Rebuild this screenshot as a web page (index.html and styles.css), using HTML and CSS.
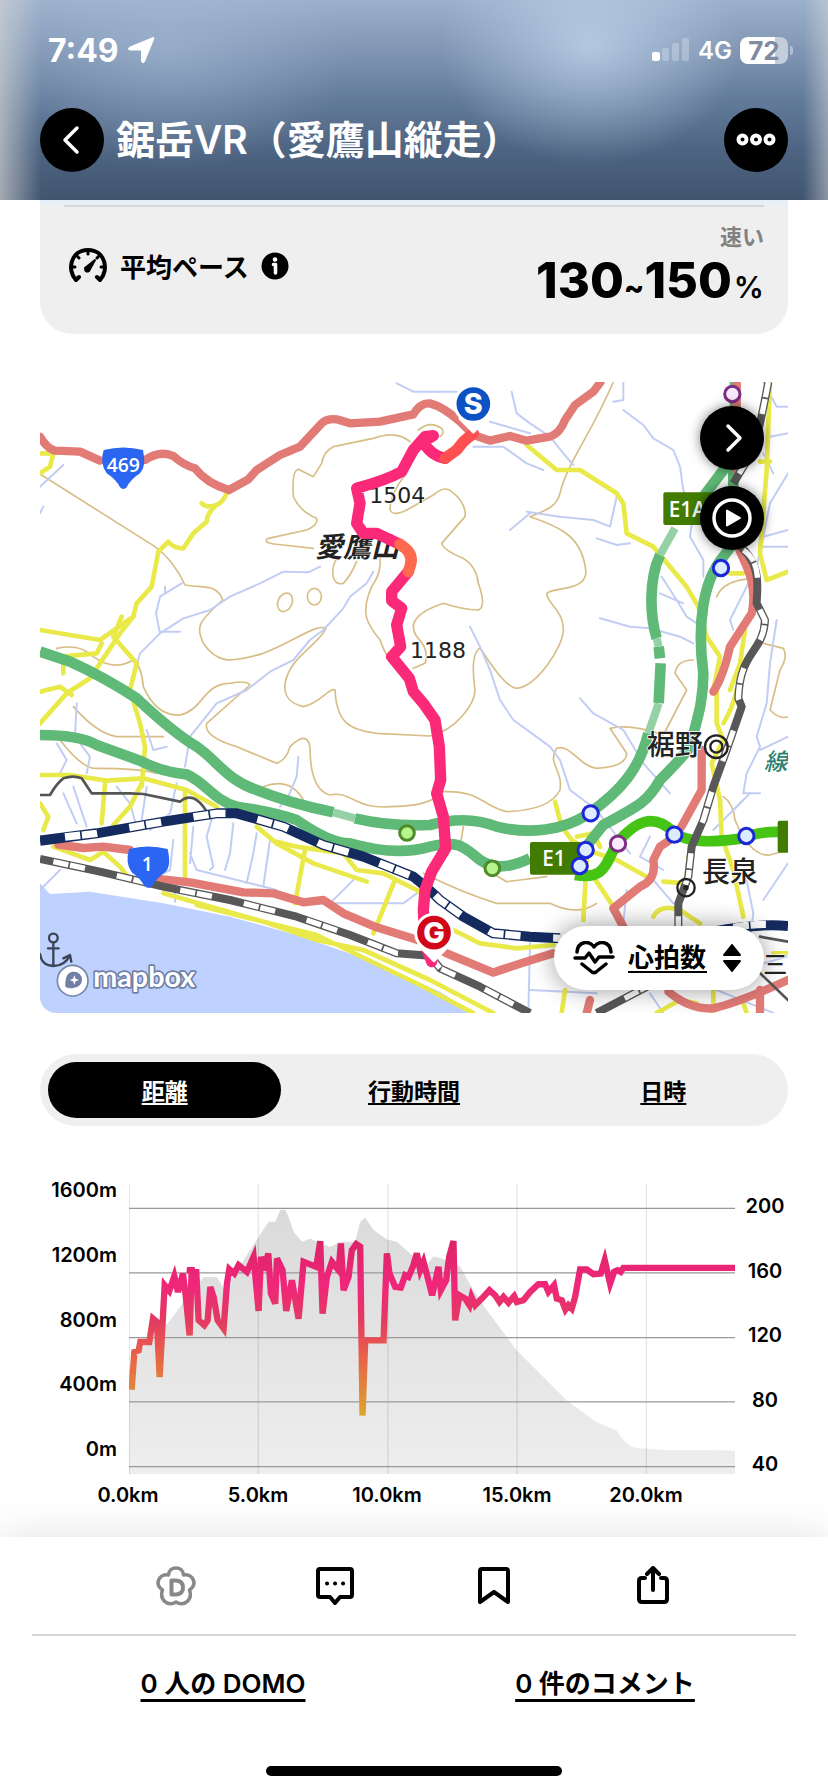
FILE: index.html
```html
<!DOCTYPE html>
<html lang="ja">
<head>
  <title>鋸岳VR（愛鷹山縦走）</title>
  <meta charset="UTF-8">
  <meta name="viewport" content="width=device-width, initial-scale=1">
  <link rel="stylesheet" href="styles.css">
</head>
<body>
<header class="header">
  <div class="status">
    <span class="clock">7:49</span>
    <svg class="location" width="28" height="28" viewBox="0 0 28 28"><path d="M25 1.500Q28 0 27 3.500L18 25.500Q15.500 29 14 25V14.500H3Q-1 13 3 10.500Z" fill="#fff"/></svg>
    <span class="spacer"></span>
    <svg width="38" height="24" viewBox="0 0 38 24" fill="#fff"><rect y="14" width="8" height="9" rx="2"/><g opacity=".25"><rect x="10" y="10" width="7" height="13" rx="2"/><rect x="20" y="5" width="7" height="18" rx="2"/><rect x="30" width="7" height="23" rx="2"/></g></svg>
    <span class="network">4G</span>
    <span class="battery">72</span>
  </div>
  <div class="titlebar">
    <button class="round" aria-label="戻る">
      <svg width="64" height="64" viewBox="0 0 64 64"><path d="M37 20L25 32L37 44" fill="none" stroke="#fff" stroke-width="3.500" stroke-linecap="round" stroke-linejoin="round"/></svg>
    </button>
    <h1>鋸岳VR（愛鷹山縦走）</h1>
    <button class="round" aria-label="メニュー">
      <svg width="64" height="64" viewBox="0 0 64 64" fill="none" stroke="#fff" stroke-width="4"><circle cx="18.500" cy="31.500" r="4"/><circle cx="32" cy="31.500" r="4"/><circle cx="45.500" cy="31.500" r="4"/></svg>
    </button>
  </div>
</header>

<main class="content">
  <section class="card">
    <div class="pace">
      <svg width="40" height="36" viewBox="0 0 40 36" fill="none" stroke="#000" stroke-width="4" stroke-linecap="round" stroke-linejoin="round">
        <path d="M8 32C-1 23 2 2 20 2S41 23 32 32M8 32l3-3M32 32l-3-3"/>
        <path d="M20 3v3M9 8l2 2M31 8l-2 2M3 19h4M37 19h-4" stroke-width="3"/>
        <path d="M17 20L27 12L21 23Q17 25 17 20Z" fill="#000" stroke-width="2"/>
      </svg>
      <span class="pace-label">平均ペース</span>
      <svg width="28" height="28" viewBox="0 0 28 28"><circle cx="14" cy="14" r="13.500"/><circle cx="14" cy="7.500" r="2.300" fill="#fff"/><path d="M12.500 12.500H14.500V21" fill="none" stroke="#fff" stroke-width="3.600" stroke-linecap="round" stroke-linejoin="round"/></svg>
    </div>
    <div class="pace-value">
      <span class="speed">速い</span>
      <span class="range">130<small class="tilde">~</small>150<small>%</small></span>
    </div>
  </section>

  <section class="map">
    <svg class="map-image" viewBox="30 36 2244 1893" fill="none" stroke-linecap="round" stroke-linejoin="round">
      <rect x="30" y="36" width="2244" height="1893" fill="#fff"/>
      <path d="M30 1540L60 1572L180 1565L400 1600L600 1640L800 1695L1000 1765L1230 1865L1330 1929H30Z" fill="#bfd2ff"/>

      <!-- contour lines -->
      <g class="contour">
        <path d="M30 312L375 530Q430 570 465 645C520 655 560 640 578 690C500 760 500 770 520 820C560 880 600 880 700 850C800 810 860 760 888 775C860 830 780 860 765 940C760 980 780 1000 820 1010C870 1000 900 950 915 960C920 1060 960 1080 1040 1090L1200 1098C1280 1080 1335 1000 1335 960Q1320 850 1350 835C1370 860 1420 950 1460 955C1520 950 1600 830 1600 780C1600 720 1550 700 1550 670C1570 650 1660 665 1668 610C1660 500 1590 470 1500 440C1550 420 1580 410 1590 370C1610 280 1680 200 1750 36"/>
        <path d="M1140 215Q1100 180 1030 205L910 230Q880 245 875 280L850 320L805 298Q785 300 790 380Q810 425 860 445Q865 465 830 480L715 505Q690 520 760 525L850 535"/>
        <path d="M920 565C900 600 905 650 940 640Q960 620 980 575M1050 560Q1055 610 1025 650C990 730 1010 760 1050 810Q1070 870 1110 900"/>
        <path d="M1130 310Q1080 370 1080 420Q1090 440 1130 420L1210 375Q1245 345 1265 365Q1310 400 1305 440L1235 520Q1240 540 1300 565Q1340 590 1345 640Q1370 710 1345 720Q1300 720 1240 700Q1120 740 1160 800Q1200 840 1185 880L1150 895"/>
        <path d="M1165 180Q1200 150 1235 175Q1245 190 1230 200"/>
        <ellipse cx="765" cy="697" rx="21" ry="29" transform="rotate(25 765 697)"/><ellipse cx="853" cy="680" rx="21" ry="25"/>
        <path d="M80 835Q150 820 190 860Q250 905 310 870Q335 890 340 950Q380 1040 450 1035C520 1020 520 940 600 940Q650 930 660 945L530 1060Q520 1100 620 1130L740 1180Q770 1170 780 1130Q830 1080 840 1130Q840 1260 900 1275C960 1260 980 1320 1080 1310Q1200 1310 1240 1265C1350 1260 1360 1310 1430 1325Q1560 1320 1590 1260C1600 1200 1550 1180 1580 1135C1620 1120 1650 1190 1700 1195Q1790 1190 1790 1150L1740 1075Q1800 1060 1900 1095L1970 960L1935 910Q1940 870 1990 870"/>
        <path d="M130 1010Q200 1090 260 1100H400M90 1110Q160 1200 200 1195Q330 1195 380 1210M700 1250Q780 1220 820 1290M1290 1430L1300 1370M1180 1510Q1300 1570 1400 1600H1560Q1640 1640 1700 1600M1370 1500L1430 1535L1550 1520M2080 1280Q2110 1300 2115 1350Q2160 1460 2220 1455L2274 1440M2200 820L2260 835Q2275 860 2250 900L2220 1020Q2250 1050 2274 1040M2060 680Q2080 630 2170 625"/>
      </g>

      <!-- rivers and streams -->
      <g class="stream">
        <path d="M1100 40L1150 65H1280M30 350L100 285M40 410L30 430M870 590L835 607L760 605L690 640L600 680L540 720L460 745L390 790L330 850L300 960"/>
        <path d="M390 790L378 730L390 680L455 640M390 785H450M405 650V670M1030 605L1010 640L960 680L940 715L880 780L840 810L790 870L720 905L650 960L560 1000L480 1100L465 1190"/>
        <path d="M1445 65L1460 130L1500 160L1560 200L1600 250L1630 285M1330 230L1420 230L1490 280L1540 300M1380 155L1500 190M1780 36V90L1750 95M1780 120L1840 165L1870 205L1930 240L1950 290L1960 360L1990 430L1980 500L2020 570V620"/>
        <path d="M1490 425L1590 440L1690 450L1740 470L1760 380M1440 480L1500 430M1700 505L1760 525L1800 520M1895 620L1940 690L1970 740L2000 760M1710 745L1800 770L1860 775L1950 800L1990 820M1890 670L1960 700M1320 770L1350 830L1380 900L1410 990L1450 1050L1560 1130L1590 1170L1620 1260L1700 1320L1800 1450"/>
        <path d="M1650 985L1690 1030L1780 1080L1840 1180L1920 1270M2274 310L2220 400L2200 500L2180 590L2100 750L2110 780M2274 480L2200 500M2274 530H2200M2240 750L2220 880L2210 1000L2180 1100L2190 1130L2150 1210L2140 1270H2190M2274 1100L2190 1140M2140 1290L2050 1380"/>
        <path d="M140 1000L135 1100L180 1160L170 1210M80 1120L110 1170L90 1210M350 1080L370 1140L410 1130M805 1160L800 1220L775 1280L750 1310M130 1250L170 1370M100 1270L140 1360M350 1250L335 1350M550 1330L530 1400L550 1490L540 1500M610 1360L600 1450L585 1500M680 1390L670 1450L650 1540M720 1410L700 1550M440 1240L420 1330L360 1380M480 1450L500 1500L740 1560M430 1410L420 1500L380 1520M490 1370L480 1480M980 1520L900 1600L1120 1600L1160 1570M435 1570V1595M260 1250L300 1300L320 1370M30 1560L90 1500"/>
        <path d="M1790 1560L1780 1660L1850 1740M1500 1720L1495 1929M1500 1860L1700 1870M1870 1530L1930 1600M2150 1530L2170 1630L2160 1700M2274 1480L2200 1590M2110 1320L2160 1270M1860 1400L1830 1460L1900 1500M1860 1870L1900 1929M2130 1800L2270 1760M2060 1860L2230 1929M2200 36L2240 110H2274M2220 200L2274 190M2200 250L2230 310"/>
      </g>

      <!-- local roads -->
      <g class="local">
        <path d="M590 370Q580 395 560 405Q530 415 515 400M560 405Q530 430 530 455L490 490L460 535Q430 535 415 515L385 545L365 650L320 700L310 740L210 810L30 780M275 740L250 800L320 880L300 960L330 1060L345 1130L335 1250M30 250H70L60 290L30 310"/>
        <path d="M310 740L270 790L180 925L110 970L30 1060M30 965L90 950L125 975M95 860L200 850L215 820M100 860V910M30 1215H120L230 1232L340 1225L470 1260L560 1310M225 1240L215 1360M335 1240L300 1310L250 1365M465 1270V1530M30 1300L55 1340L40 1380"/>
        <path d="M680 1370L740 1420L850 1480L1010 1535M740 1415L800 1430L940 1450L980 1500L1060 1510L1160 1560L1190 1580M825 1440L795 1600M1095 1530L1030 1690M70 1430L180 1470L220 1445L270 1490L300 1530M400 1570L700 1655L860 1710L1000 1740L1200 1830L1390 1929M500 1605L860 1695L1170 1845L1330 1929"/>
        <path d="M1490 225L1580 300L1650 300L1760 370L1780 400L1790 490L1870 530L1920 590L1970 650L2005 710L2030 800L2070 860L2050 960M2220 36L2210 300L2190 550L2210 630L2274 605M2100 610H2140M2190 275H2220M2145 780L2130 880L2100 960M2060 950L2060 1060L2080 1110L2045 1180L2070 1290L2075 1400L2110 1500L2140 1640M2120 960Q2110 1010 2080 1060"/>
        <path d="M1575 1295L1595 1370L1625 1410L1670 1440L1760 1470L1850 1520M1670 1470L1660 1650M1690 1520L1750 1610L1780 1660M1640 1400L1690 1390L1710 1430M1900 1535L1970 1540M1870 1640Q1890 1600 1950 1620L2010 1660M1970 1520L1980 1430M1270 1680L1350 1720L1460 1735L1570 1725M1605 1860L1595 1929M1880 1929L1950 1890L2000 1900M2050 1860V1929M2140 1900L2150 1929M2230 1750H2274"/>
      </g>

      <!-- expressways -->
      <g class="express">
        <path d="M30 845L120 875Q220 920 320 985C400 1060 450 1100 500 1130C560 1170 590 1230 680 1260Q780 1300 910 1327M975 1345Q1080 1370 1200 1365C1290 1340 1350 1350 1400 1370C1500 1395 1600 1380 1670 1335C1780 1260 1830 1190 1855 1090M1886 1000L1892 880M1890 865L1886 830M1880 805C1860 740 1855 630 1890 555M2020 380L2080 300L2115 200V36"/>
        <path d="M30 1095Q150 1095 200 1125L330 1172Q390 1205 470 1213C530 1240 550 1290 620 1310Q730 1325 800 1350Q900 1420 960 1420Q1100 1460 1200 1430C1290 1410 1300 1430 1350 1470Q1410 1510 1500 1465M1660 1440L1720 1365C1820 1310 1850 1300 1890 1230Q1960 1160 1980 1130C2000 1050 2020 1000 2020 910C2000 760 2020 630 2080 560L2110 520V300"/>
        <path class="faded" d="M910 1327L975 1345M1855 1090L1886 1000M1890 555L1935 475M1880 805L1886 830"/>
        <path class="ic" d="M1635 1515C1720 1530 1725 1490 1760 1420C1820 1350 1870 1330 1930 1385C1980 1430 2090 1410 2140 1405Q2190 1380 2274 1387"/>
      </g>

      <!-- national roads -->
      <g class="national">
        <path d="M30 200Q50 235 75 242L150 245L210 272M345 270Q390 240 430 258Q460 285 495 295Q530 340 597 360L655 328L680 300L750 255L810 230L875 160Q890 145 920 148L960 160L1050 155L1150 133Q1170 98 1200 100Q1240 110 1290 155L1330 195L1380 212L1440 198L1490 212L1560 200Q1590 190 1605 150L1635 105L1690 65L1712 36"/>
        <path d="M85 1424L160 1434L220 1430L300 1440L370 1525L480 1537L640 1567L730 1570L820 1597L880 1590L940 1630L1040 1672L1180 1715L1250 1750L1390 1808Q1440 1790 1570 1750"/>
        <path d="M2120 36V300M2110 500L2150 590Q2180 660 2165 730L2100 830Q2080 920 2050 965M2015 1140V1260L1960 1360Q1940 1400 1890 1430L1870 1470Q1880 1530 1830 1550L1750 1615L1785 1680M1915 1865Q1980 1920 2050 1915Q2120 1900 2274 1830M2190 1860V1929M1680 1890L1670 1929"/>
      </g>

      <!-- railways -->
      <path class="line" d="M30 1275H60Q80 1240 100 1225Q130 1215 155 1225L185 1270H300L340 1272L450 1295Q490 1260 530 1325"/>
      <g>
        <path class="jr" d="M30 1467L210 1505L400 1550L600 1590L800 1640L960 1695L1100 1750L1200 1757L1230 1795L1350 1850L1500 1929"/>
        <path class="jr-gap" d="M70 1475L210 1505L400 1550L600 1590L800 1640L960 1695L1100 1750L1200 1757L1230 1795L1350 1850L1500 1929"/>
        <path class="jr" d="M2215 36Q2190 170 2170 240L2110 340M2120 520C2200 580 2180 660 2180 700L2205 750C2200 850 2130 840 2125 985L2135 1010L2090 1140L2050 1250L2020 1350L1985 1430L1975 1520L1945 1600V1670M1870 1840L1700 1929"/>
        <path class="jr-gap" d="M2215 36Q2190 170 2170 240L2110 340M2140 540C2200 580 2180 660 2180 700L2205 750C2200 850 2130 840 2125 985L2135 1010L2090 1140L2050 1250L2020 1350L1985 1430L1975 1520L1945 1600V1670M1870 1840L1700 1929"/>
        <path class="shinkansen" d="M30 1412L200 1390L400 1355L560 1330L620 1330L760 1370L880 1425L1000 1460L1150 1520Q1200 1560 1230 1590L1300 1640L1390 1690L1500 1700L1590 1705M2050 1685Q2180 1660 2274 1668"/>
        <path class="shinkansen-gap" d="M105 1401L200 1390L400 1355L560 1330L620 1330L760 1370L880 1425L1000 1460L1150 1520Q1200 1560 1230 1590L1300 1640L1390 1690L1500 1700L1590 1705M2110 1672Q2180 1660 2230 1664"/>
        <path class="line" d="M2170 1790L2274 1890M2190 1700L2274 1715"/>
      </g>

      <!-- junctions and town marks -->
      <g class="junction">
        <circle cx="1682" cy="1330" r="23"/><circle cx="1933" cy="1394" r="23"/><circle cx="2149" cy="1398" r="23"/><circle cx="2073" cy="594" r="23"/>
        <circle class="purple" cx="2107" cy="72" r="23"/><circle class="purple" cx="1764" cy="1421" r="23"/>
        <circle class="green" cx="1131" cy="1389" r="22"/><circle class="green" cx="1387" cy="1495" r="22"/>
      </g>
      <circle cx="2059" cy="1130" r="34" class="town"/><circle cx="2059" cy="1130" r="18" class="town"/>
      <circle cx="1968" cy="1553" r="26" class="town"/><circle cx="1968" cy="1553" r="8" fill="#222"/>

      <!-- shields -->
      <g class="shield">
        <path d="M221 240Q280 225 339 240Q350 290 330 310Q300 330 290 352Q280 362 270 352Q260 330 230 310Q208 280 221 240Z" fill="#2a66f2"/>
        <text x="280" y="305" font-size="58">469</text>
        <path d="M297 1437Q355 1422 413 1437Q425 1490 405 1507Q380 1525 368 1546Q355 1562 342 1546Q330 1525 305 1507Q285 1480 297 1437Z" fill="#2a66f2"/>
        <text x="352" y="1503" font-size="58">1</text>
        <rect x="1900" y="367" width="180" height="98" rx="6" fill="#417c00"/><text x="1972" y="440" font-size="62">E1A</text>
        <rect x="1500" y="1416" width="155" height="98" rx="6" fill="#417c00"/><text x="1572" y="1488" font-size="62">E1</text>
        <rect x="2243" y="1352" width="50" height="96" rx="6" fill="#417c00"/>
      </g>
      <g class="junction"><circle cx="1667" cy="1440" r="23"/><circle cx="1649" cy="1488" r="23"/></g>

      <g class="place">
        <text x="1018" y="398" font-size="66">1504</text>
        <text x="1140" y="863" font-size="66">1188</text>
        <text class="mountain" x="855" y="560" font-size="84">愛鷹山</text>
        <text x="1850" y="1156" font-size="84">裾野</text>
        <text x="2016" y="1536" font-size="84">長泉</text>
        <text class="river-name" x="2202" y="1200" font-size="70">線</text>
        <text x="2200" y="1810" font-size="72">三</text>
      </g>
      <path d="M70 1718V1788M54 1735H86M30 1752Q35 1788 70 1788T120 1755L100 1765M120 1755L124 1775" stroke="#3a4456" stroke-width="7"/><circle cx="70" cy="1704" r="13" stroke="#3a4456" stroke-width="7"/>

      <g class="mapbox">
        <circle cx="128" cy="1832" r="46" fill="#fff" stroke="#7787a8" stroke-width="5"/>
        <path d="M106 1850C105 1810 120 1805 132 1805A24 24 0 0 1 132 1853Q120 1858 106 1850Z" fill="#7080a5"/>
        <path d="M133 1816L137 1826L147 1830L137 1834L133 1844L129 1834L119 1830L129 1826Z" fill="#fff"/>
        <text x="190" y="1852">mapbox</text>
      </g>

      <!-- activity track coloured by heart rate -->
      <g class="track">
        <path d="M1245 265Q1200 255 1180 215L1210 197L1185 200L1150 240L1115 305Q1070 330 980 355L990 400L980 460L1000 490L1040 490L1110 523M1135 605L1085 665V692L1115 715L1100 765L1112 830L1085 860L1138 925L1150 965L1180 1000L1215 1050L1228 1130L1232 1230L1220 1270L1240 1340L1247 1435L1205 1505L1185 1560L1180 1620L1185 1720L1205 1775"/>
        <path d="M1330 190L1300 215L1280 240L1245 265" stroke="#ff4f50"/>
        <path d="M1110 523Q1155 550 1140 590L1135 605" stroke="#ff6a4e"/>
      </g>
      <g class="pin">
        <path d="M1290 145L1330 186L1370 145Z"/><circle cx="1330" cy="102" r="55" fill="#0c52c4"/><text x="1330" y="133">S</text>
        <path d="M1172 1731L1212 1772L1252 1731Z"/><circle cx="1212" cy="1688" r="55" fill="#cf0718"/><text x="1212" y="1719">G</text>
      </g>
    </svg>

    <div class="map-buttons">
      <button class="round" aria-label="次へ">
        <svg width="64" height="64" viewBox="0 0 64 64"><path d="M28 20L40 32L28 44" fill="none" stroke="#fff" stroke-width="3.500" stroke-linecap="round" stroke-linejoin="round"/></svg>
      </button>
      <button class="round" aria-label="再生">
        <svg width="64" height="64" viewBox="0 0 64 64"><circle cx="32" cy="32" r="18" fill="none" stroke="#fff" stroke-width="3.500"/><path d="M27 24.500V39.500L40 32Z" fill="#fff" stroke="#fff" stroke-width="2" stroke-linejoin="round"/></svg>
      </button>
    </div>

    <label class="metric">
      <svg width="42" height="34" viewBox="0 0 42 34" fill="none" stroke="#000" stroke-width="3.500" stroke-linecap="round" stroke-linejoin="round"><path d="M4 11C5 0 16-1 21 6C26-1 37 0 38 11M2 17H12L16 12L22 21L26 16H40M9 23L19 31Q21 32.500 23 31L33 23"/></svg>
      <select aria-label="表示する指標">
        <option>心拍数</option>
        <option>標高</option>
      </select>
      <svg class="sort" width="18" height="28" viewBox="0 0 18 28" stroke="#000" stroke-width="2" stroke-linejoin="round"><path d="M9 1L17 11H1ZM9 27L17 17H1Z"/></svg>
    </label>
  </section>

  <nav class="tabs">
    <button class="tab active">距離</button>
    <button class="tab">行動時間</button>
    <button class="tab">日時</button>
  </nav>

  <svg class="chart" viewBox="0 0 748 344">
    <defs>
      <linearGradient id="elevation" x1="0" y1="0" x2="0" y2="1"><stop offset="0" stop-color="#dadada"/><stop offset="1" stop-color="#eeeeee"/></linearGradient>
      <linearGradient id="heart" gradientUnits="userSpaceOnUse" x1="0" y1="213" x2="0" y2="735"><stop offset="0" stop-color="#dc2468"/><stop offset=".25" stop-color="#f0267a"/><stop offset=".45" stop-color="#e23a62"/><stop offset=".65" stop-color="#e8604a"/><stop offset="1" stop-color="#dca52c"/></linearGradient>
    </defs>
    <svg x="89" y="14" width="606" height="290" viewBox="296 42 1819 868" preserveAspectRatio="none">
      <path fill="url(#elevation)" d="M296 910V600L330 540L370 500L420 450L470 380L520 320H560L580 355L600 330L640 270L680 208L715 155L735 155L750 120L765 118L775 140L790 185L815 215L840 205L870 220L900 230L930 215H975L990 155L1005 143L1030 180L1070 208L1100 215L1140 250L1185 290L1210 258L1235 265L1290 290L1330 360L1370 420L1460 540L1540 620L1610 690L1700 755L1760 780Q1790 830 1820 832L1900 838L2115 840V910Z"/>
      <g class="grid-y"><path d="M297 42V910M684 42V910M1073 42V910M1461 42V910M1849 42V910"/></g>
      <g class="grid-x"><path d="M296 115H2115M296 308H2115M296 502H2115M296 694H2115M296 888H2115"/></g>
      <polyline fill="none" stroke="url(#heart)" stroke-width="19" points="304,658 312,545 325,540 330,515 357,515 368,445 380,455 388,620 403,345 417,362 432,318 443,365 458,310 466,375 478,495 484,300 470,300 498,305 505,450 522,465 532,450 540,350 550,380 562,450 580,475 590,340 597,297 612,310 625,285 650,305 670,260 685,422 692,260 702,300 714,250 722,370 735,400 740,265 757,300 768,422 785,330 805,445 820,275 858,290 870,213 877,430 890,320 905,275 925,300 932,220 940,360 955,320 965,240 978,222 990,230 997,735 1005,510 1060,510 1070,250 1078,310 1095,350 1112,352 1125,315 1135,320 1148,290 1160,250 1170,300 1180,275 1192,320 1206,375 1225,290 1232,360 1248,330 1257,260 1270,213 1275,450 1288,375 1305,385 1318,405 1324,380 1335,405 1355,385 1378,360 1395,375 1408,395 1420,380 1435,397 1452,378 1460,395 1480,390 1500,365 1525,342 1545,342 1555,365 1572,345 1580,385 1595,390 1606,418 1615,405 1625,415 1635,380 1650,298 1670,298 1690,312 1712,310 1724,270 1740,340 1752,305 1762,300 1772,305 1780,293 2115,293"/>
    </svg>
    <g class="axis left"><text x="77" y="27">1600m</text><text x="77" y="92">1200m</text><text x="77" y="157">800m</text><text x="77" y="221">400m</text><text x="77" y="286">0m</text></g>
    <g class="axis"><text x="725" y="43">200</text><text x="725" y="108">160</text><text x="725" y="172">120</text><text x="725" y="237">80</text><text x="725" y="301">40</text></g>
    <g class="axis"><text x="88" y="332">0.0km</text><text x="218" y="332">5.0km</text><text x="347" y="332">10.0km</text><text x="477" y="332">15.0km</text><text x="606" y="332">20.0km</text></g>
  </svg>
</main>

<footer class="footer">
  <div class="actions">
    <button aria-label="DOMO">
      <svg width="40" height="40" viewBox="0 0 40 40" fill="none" stroke="#888" stroke-width="3.500" stroke-linejoin="round"><path d="M12.500 9C13-.5 27-.5 27.500 9C37 7.500 42 18 33.500 24C37 34 28 41 20 36C12 41 3 34 6.500 24C-2 18 3 7.500 12.500 9Z"/><path d="M15.500 14.500H20Q27 15 27 21.500T20 28.500H15.500Z" stroke-width="4"/></svg>
    </button>
    <button aria-label="コメント">
      <svg width="40" height="40" viewBox="0 0 40 40" fill="none" stroke="#000" stroke-width="4" stroke-linejoin="round"><path d="M5 3H35Q37 3 37 5V29Q37 31 35 31H25L20 37L15 31H5Q3 31 3 29V5Q3 3 5 3Z"/><path d="M12 17.500h.1M20 17.500h.1M28 17.500h.1" stroke-linecap="round"/></svg>
    </button>
    <button aria-label="ブックマーク">
      <svg width="40" height="40" viewBox="0 0 40 40" fill="none" stroke="#000" stroke-width="4" stroke-linejoin="round"><path d="M8 3H32Q34 3 34 5V36L20 26L6 36V5Q6 3 8 3Z"/></svg>
    </button>
    <button aria-label="共有">
      <svg width="40" height="40" viewBox="0 0 40 40" fill="none" stroke="#000" stroke-width="4" stroke-linecap="round" stroke-linejoin="round"><path d="M12 12H9Q6 12 6 15V33Q6 36 9 36H31Q34 36 34 33V15Q34 12 31 12H28M20 24V3M14 8L20 2L26 8"/></svg>
    </button>
  </div>
  <div class="counts">
    <a href="#domo">0 人の DOMO</a>
    <a href="#comments">0 件のコメント</a>
  </div>
  <div class="home-bar"></div>
</footer>
</body>
</html>
```

FILE: styles.css
```css
* {
  box-sizing: border-box;
}

body {
  margin: 0;
  min-height: 100vh;
  display: flex;
  flex-direction: column;
  background: #fff;
  color: #000;
  font-family: Inter, "Noto Sans CJK JP", sans-serif;
}

svg {
  display: block;
}

button {
  padding: 0;
  border: 0;
  background: none;
  color: inherit;
  font: inherit;
}

.header {
  height: 200px;
  padding: 28px 40px;
  color: #fff;
  background:
    linear-gradient(90deg, rgba(215,215,215,.65), rgba(200,205,212,0) 5%, rgba(200,205,212,0) 97%, rgba(215,215,215,.5)),
    radial-gradient(ellipse 150px 120px at 590px 45px, rgba(195,215,238,.75), rgba(195,215,238,0)),
    radial-gradient(ellipse 180px 120px at 170px 50px, rgba(170,192,220,.5), rgba(170,192,220,0)),
    linear-gradient(#9bb1cb, #8096b4 25%, #637b9b 50%, #4d6482 75%, #41556f);
}

.status {
  display: flex;
  align-items: center;
  height: 44px;
  padding-left: 8px;
}

.clock {
  font-size: 32px;
  font-weight: 700;
}

.location {
  margin-left: 8px;
}

.spacer {
  flex: 1;
}

.network {
  margin: 0 8px;
  font-size: 24px;
  font-weight: 600;
}

.battery {
  position: relative;
  width: 48px;
  height: 27px;
  border-radius: 8px;
  background: linear-gradient(90deg, #fff 72%, #c3cddb 72%);
  color: #7e8ba0;
  font-size: 26px;
  font-weight: 700;
  line-height: 27px;
  text-align: center;
}

.battery::after {
  content: "";
  position: absolute;
  left: 50px;
  top: 9px;
  width: 3px;
  height: 9px;
  border-radius: 0 3px 3px 0;
  background: #b3bfd0;
}

.titlebar {
  display: flex;
  align-items: center;
  margin-top: 36px;
}

.titlebar h1 {
  flex: 1;
  margin: 0 12px;
  font-size: 39px;
  font-weight: 600;
  line-height: 64px;
}

.round {
  flex: none;
  width: 64px;
  height: 64px;
  border-radius: 50%;
  background: #000;
}

.content {
  padding: 0 40px;
}

.card {
  display: flex;
  justify-content: space-between;
  height: 134px;
  padding: 0 24px;
  border-radius: 0 0 32px 32px;
  background: linear-gradient(#e6eef8 5px, #efefef 5px);
}

.card::before {
  content: "";
  position: absolute;
  left: 64px;
  right: 64px;
  top: 205px;
  height: 2px;
  background: #d6d6d6;
}

.pace {
  display: flex;
  align-items: center;
  padding: 0 0 3px 4px;
}

.pace-label {
  margin: 0 12px;
  font-size: 26px;
  font-weight: 700;
}

.pace-value {
  display: flex;
  flex-direction: column;
  align-items: flex-end;
  padding-top: 22px;
}

.speed {
  color: #828282;
  font-size: 22px;
  font-weight: 600;
  line-height: 30px;
}

.range {
  font-size: 49px;
  font-weight: 800;
  line-height: 58px;
}

.range small {
  margin-left: 2px;
  font-size: 30px;
  font-weight: 600;
}

.range .tilde {
  margin: 0;
  font-weight: 800;
}

.map {
  position: relative;
  margin-top: 48px;
  border-radius: 0 0 0 16px;
  overflow: hidden;
}

.map-image {
  width: 100%;
}

.contour {
  stroke: #d8bd86;
  stroke-width: 5;
}

.stream {
  stroke: #c2cdf4;
  stroke-width: 6;
}

.local {
  stroke: #e9e94a;
  stroke-width: 14;
}

.express {
  stroke: #5fb977;
  stroke-width: 32;
  stroke-linecap: butt;
}

.express .faded {
  stroke: #94d1a4;
  stroke-width: 24;
}

.express .ic {
  stroke: #46c414;
}

.national {
  stroke: #e27b76;
  stroke-width: 25;
}

.line {
  stroke: #555;
  stroke-width: 8;
}

.jr,
.shinkansen {
  stroke: #585858;
  stroke-width: 24;
  stroke-linecap: butt;
}

.shinkansen {
  stroke: #152b60;
  stroke-width: 30;
}

.jr-gap,
.shinkansen-gap {
  stroke: #fff;
  stroke-width: 16;
  stroke-linecap: butt;
  stroke-dasharray: 46 5 46 98;
}

.shinkansen-gap {
  stroke-width: 22;
}

.junction {
  fill: #dcebff;
  stroke: #1c28d8;
  stroke-width: 9;
}

.junction .purple {
  fill: #fbeaff;
  stroke: #7d2d85;
}

.junction .green {
  fill: #b5f58b;
  stroke: #4f8b2c;
}

.town {
  stroke: #222;
  stroke-width: 7;
}

.shield text {
  fill: #fff;
  font-family: "Open Sans", sans-serif;
  font-weight: 600;
  text-anchor: middle;
}

.place text {
  font-family: "DejaVu Sans", "Noto Sans CJK JP", sans-serif;
  font-weight: 500;
  fill: #222;
  stroke: #fff;
  stroke-width: 5;
  paint-order: stroke;
}

.place .mountain {
  font-style: italic;
  font-weight: 700;
}

.place .river-name {
  fill: #2a8273;
  font-style: italic;
}

.mapbox text {
  font-family: Lato, sans-serif;
  font-size: 86px;
  font-weight: 700;
  fill: #fff;
  stroke: #7080a5;
  stroke-width: 10;
  paint-order: stroke;
}

.track {
  stroke: #fb2a78;
  stroke-width: 34;
}

.pin {
  fill: #fff;
  stroke: #fff;
  stroke-width: 9;
}

.pin text {
  font-size: 86px;
  font-weight: 800;
  stroke: none;
  text-anchor: middle;
}

.map-buttons {
  position: absolute;
  top: 24px;
  right: 24px;
  display: flex;
  flex-direction: column;
  gap: 16px;
}

.map-buttons .round {
  box-shadow: 0 0 12px rgba(0,0,0,.5);
}

.metric {
  position: absolute;
  right: 24px;
  bottom: 23px;
  display: flex;
  align-items: center;
  height: 64px;
  padding: 0 23px 0 19px;
  border-radius: 32px;
  background: #fff;
  box-shadow: 0 0 24px rgba(0,0,0,.4);
}

.metric select {
  appearance: none;
  margin: 0 16px 0 13px;
  padding: 0;
  border: 0;
  background: linear-gradient(#000, #000) bottom / 100% 2px no-repeat;
  color: #000;
  font-family: inherit;
  font-size: 26px;
  font-weight: 700;
  line-height: 30px;
}

.tabs {
  display: flex;
  gap: 16px;
  margin-top: 41px;
  padding: 8px;
  border-radius: 36px;
  background: #efefef;
}

.tab {
  flex: 1;
  height: 56px;
  border-radius: 28px;
  font-size: 23px;
  font-weight: 700;
  text-decoration: underline;
  text-decoration-thickness: 2px;
  text-underline-offset: 3px;
}

.tab.active {
  background: #000;
  color: #fff;
}

.chart {
  width: 100%;
  margin-top: 44px;
}

.grid-x {
  stroke: #999;
  stroke-width: 4;
}

.grid-y {
  stroke: #000;
  stroke-opacity: .1;
  stroke-width: 4;
}

.axis {
  font-size: 20px;
  font-weight: 600;
  text-anchor: middle;
}

.axis.left {
  text-anchor: end;
}

.footer {
  margin-top: auto;
  height: 255px;
  display: flex;
  flex-direction: column;
  padding: 0 32px 16px;
  background: #fff;
  box-shadow: 0 0 40px rgba(0,0,0,.12);
}

.actions {
  display: flex;
  height: 99px;
  padding: 0 64px;
  border-bottom: 2px solid #d5d5d5;
}

.actions button {
  flex: 1;
  display: flex;
  align-items: center;
  justify-content: center;
}

.counts {
  display: flex;
  padding-top: 30px;
}

.counts a {
  flex: 1;
  color: #000;
  font-size: 26px;
  font-weight: 600;
  line-height: 36px;
  text-align: center;
  text-decoration-thickness: 3px;
  text-underline-offset: 6px;
}

.home-bar {
  width: 296px;
  max-width: 50%;
  height: 10px;
  margin: auto auto 0;
  border-radius: 5px;
  background: #000;
}
```
